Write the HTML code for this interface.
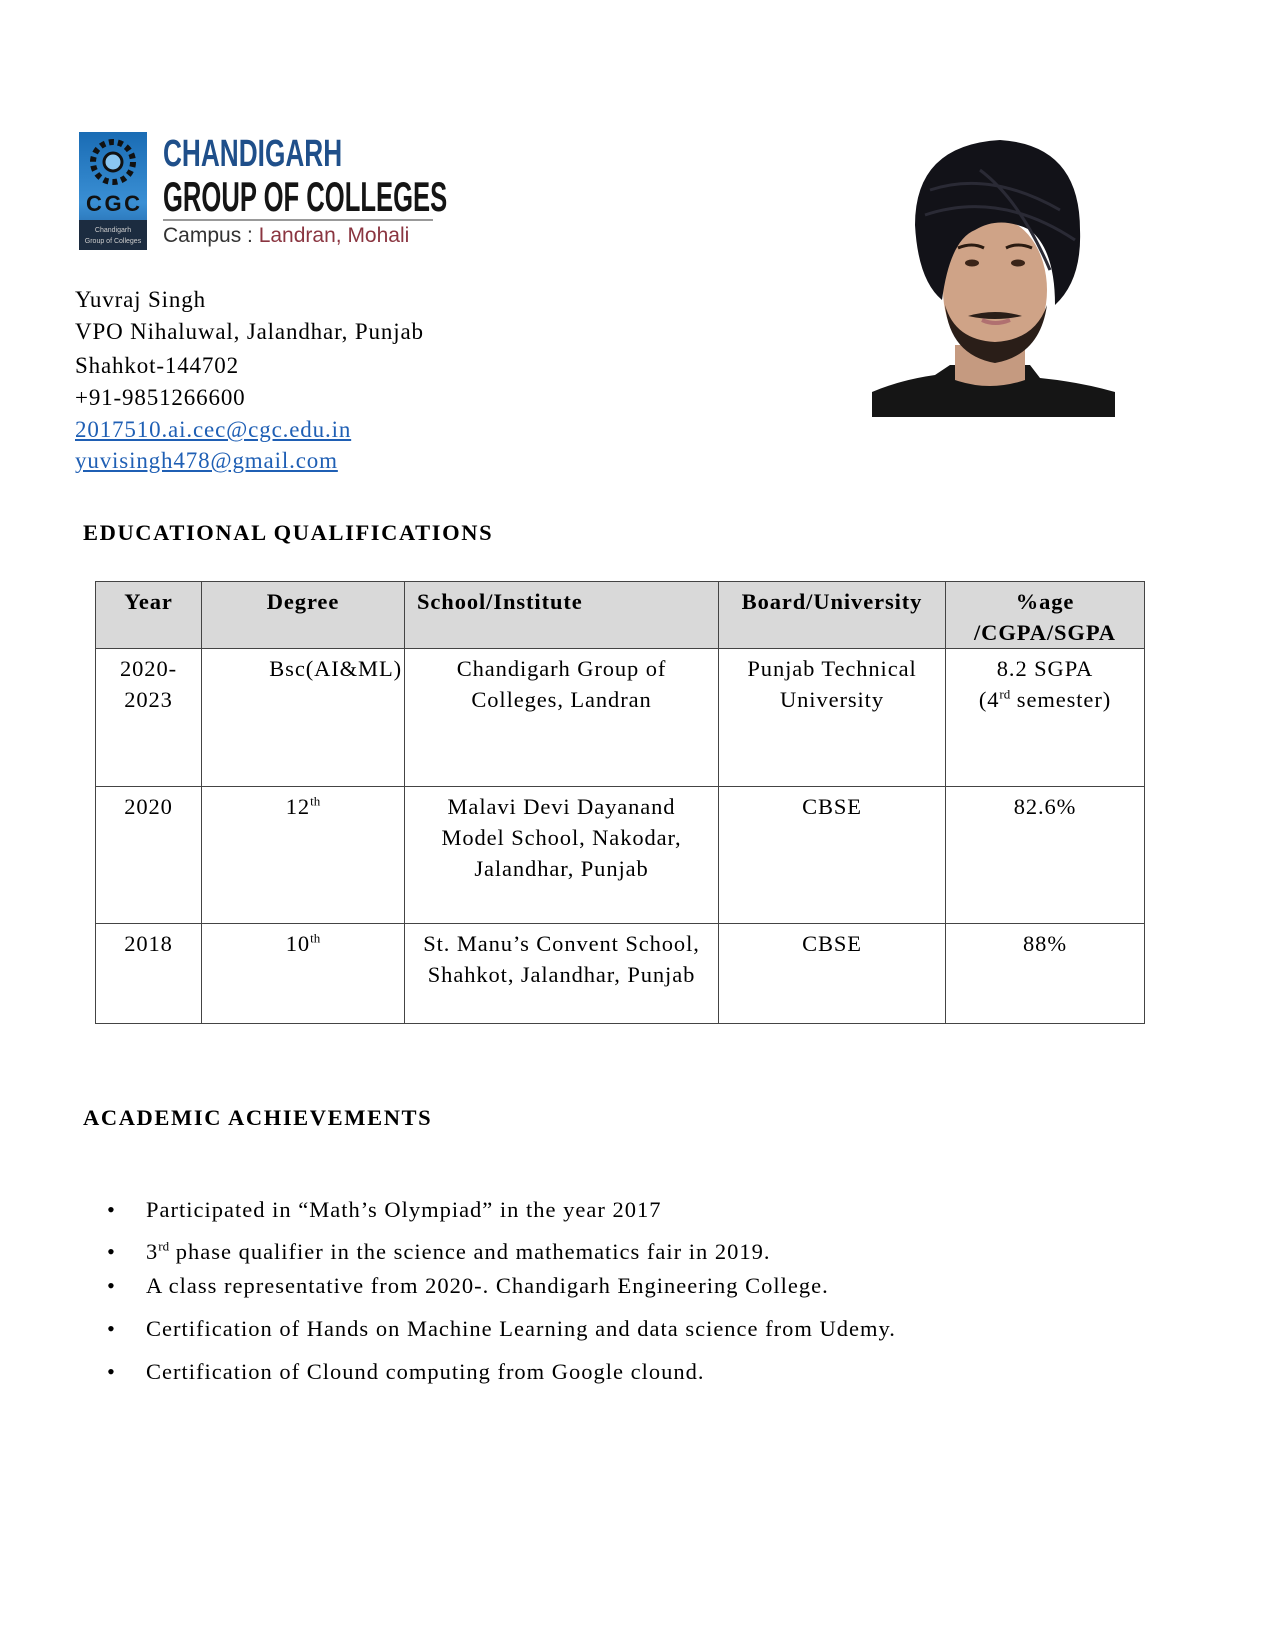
<!DOCTYPE html>
<html><head><meta charset="utf-8"><style>
body{margin:0;background:#fff;}
.page{position:relative;width:1275px;height:1650px;background:#fff;font-family:"Liberation Serif",serif;color:#000;overflow:hidden;}
.abs{position:absolute;white-space:nowrap;}
.t{font-size:23px;line-height:26px;letter-spacing:0.85px;}
a{color:#1f5fb4;text-decoration:underline;}
.h{font-weight:bold;font-size:22.5px;letter-spacing:1.6px;}
table{position:absolute;left:95px;top:581px;border-collapse:collapse;font-size:22.5px;line-height:31px;letter-spacing:0.9px;}
td{border:1.5px solid #444;vertical-align:top;text-align:center;padding:4px 2px 0 2px;white-space:nowrap;}
tr.hd td{background:#d9d9d9;font-weight:bold;}
sup{font-size:13px;line-height:0;letter-spacing:0;}
.bul{position:absolute;left:107px;font-size:22.5px;}
.bt{position:absolute;left:146px;font-size:22.5px;white-space:nowrap;letter-spacing:1px;}
</style></head><body><div class="page">

<!-- logo -->
<div class="abs" style="left:79px;top:132px;width:68px;height:118px;background:linear-gradient(180deg,#1a6cb4,#3a8fd4 60%,#1a5a9a);"></div>
<svg class="abs" style="left:79px;top:132px" width="68" height="118">
<circle cx="34" cy="30" r="20" fill="none" stroke="#111" stroke-width="6" stroke-dasharray="5 4"/>
<circle cx="34" cy="30" r="9" fill="#8ac6f0" stroke="#111" stroke-width="3"/>
<text x="34" y="79" font-family="Liberation Sans" font-weight="bold" font-size="22" fill="#111" text-anchor="middle" textLength="54">CGC</text>
<rect x="0" y="88" width="68" height="30" fill="#1c2c40"/>
<text x="34" y="100" font-size="7" fill="#ccc" text-anchor="middle" font-family="Liberation Sans">Chandigarh</text>
<text x="34" y="111" font-size="7" fill="#ccc" text-anchor="middle" font-family="Liberation Sans">Group of Colleges</text>
</svg>
<div class="abs" style="left:163px;top:134px;font-family:'Liberation Sans';font-weight:bold;font-size:38px;line-height:40px;color:#1f4f8a;transform:scaleX(0.69);transform-origin:left;">CHANDIGARH</div>
<div class="abs" style="left:163px;top:176px;font-family:'Liberation Sans';font-weight:bold;font-size:42px;line-height:42px;color:#151515;transform:scaleX(0.61);transform-origin:left;">GROUP OF COLLEGES</div>
<div class="abs" style="left:163px;top:219px;width:270px;height:2px;background:#999"></div>
<div class="abs" style="left:163px;top:224px;font-family:'Liberation Sans';font-size:21px;color:#333">Campus : <span style="color:#8a3540">Landran, Mohali</span></div>

<!-- photo -->
<svg class="abs" style="left:860px;top:130px" width="260" height="300" viewBox="0 0 260 300">
<path d="M12 287 L12 262 Q40 250 75 245 L90 235 L170 235 L180 248 Q220 252 255 262 L255 287 Z" fill="#151515"/>
<path d="M95 215 L95 250 Q130 262 165 250 L165 215 Z" fill="#c59a80"/>
<ellipse cx="135" cy="160" rx="52" ry="72" fill="#cfa387"/>
<path d="M85 175 Q90 225 135 233 Q180 225 187 175 Q175 210 135 212 Q95 210 85 175Z" fill="#2a1e18"/>
<path d="M108 186 Q135 178 162 186 Q135 192 108 186Z" fill="#2a1e18"/>
<path d="M55 95 Q55 15 140 10 Q220 15 220 100 Q222 150 195 175 Q195 120 170 100 Q140 85 115 100 Q90 110 82 170 Q58 150 55 95Z" fill="#121218"/>
<path d="M70 60 Q130 40 200 80 M65 85 Q140 60 215 110 M120 40 Q160 70 190 140" stroke="#2a2a35" stroke-width="3" fill="none"/>
<ellipse cx="112" cy="133" rx="7" ry="3.5" fill="#3a2418"/>
<ellipse cx="158" cy="133" rx="7" ry="3.5" fill="#3a2418"/>
<path d="M98 118 Q112 112 124 118 M146 118 Q158 112 172 118" stroke="#2a1a10" stroke-width="3" fill="none"/>
<path d="M122 190 Q135 196 150 190" stroke="#b07070" stroke-width="4" fill="none"/>
</svg>

<!-- contact -->
<div class="abs t" style="left:75px;top:287px">Yuvraj Singh</div>
<div class="abs t" style="left:75px;top:319px">VPO Nihaluwal, Jalandhar, Punjab</div>
<div class="abs t" style="left:75px;top:353px">Shahkot-144702</div>
<div class="abs t" style="left:75px;top:385px">+91-9851266600</div>
<div class="abs t" style="left:75px;top:417px"><a>2017510.ai.cec@cgc.edu.in</a></div>
<div class="abs t" style="left:75px;top:448px"><a>yuvisingh478@gmail.com</a></div>

<div class="abs h" style="left:83px;top:520px">EDUCATIONAL QUALIFICATIONS</div>

<table>
<colgroup><col style="width:106px"><col style="width:203px"><col style="width:314px"><col style="width:227px"><col style="width:199px"></colgroup>
<tr class="hd" style="height:67px"><td>Year</td><td>Degree</td><td style="text-align:left;padding-left:12px">School/Institute</td><td>Board/University</td><td>%age<br>/CGPA/SGPA</td></tr>
<tr style="height:138px"><td>2020-<br>2023</td><td style="text-align:right;padding-right:2px">Bsc(AI&amp;ML)</td><td>Chandigarh Group of<br>Colleges, Landran</td><td>Punjab Technical<br>University</td><td>8.2 SGPA<br>(4<sup>rd</sup> semester)</td></tr>
<tr style="height:137px"><td>2020</td><td>12<sup>th</sup></td><td>Malavi Devi Dayanand<br>Model School, Nakodar,<br>Jalandhar, Punjab</td><td>CBSE</td><td>82.6%</td></tr>
<tr style="height:100px"><td>2018</td><td>10<sup>th</sup></td><td>St. Manu’s Convent School,<br>Shahkot, Jalandhar, Punjab</td><td>CBSE</td><td>88%</td></tr>
</table>

<div class="abs h" style="left:83px;top:1105px">ACADEMIC ACHIEVEMENTS</div>

<div class="bul" style="top:1197px">•</div><div class="bt" style="top:1197px">Participated in “Math’s Olympiad” in the year 2017</div>
<div class="bul" style="top:1239px">•</div><div class="bt" style="top:1239px">3<sup>rd</sup> phase qualifier in the science and mathematics fair in 2019.</div>
<div class="bul" style="top:1273px">•</div><div class="bt" style="top:1273px">A class representative from 2020-. Chandigarh Engineering College.</div>
<div class="bul" style="top:1316px">•</div><div class="bt" style="top:1316px">Certification of Hands on Machine Learning and data science from Udemy.</div>
<div class="bul" style="top:1359px">•</div><div class="bt" style="top:1359px">Certification of Clound computing from Google clound.</div>

</div></body></html>
